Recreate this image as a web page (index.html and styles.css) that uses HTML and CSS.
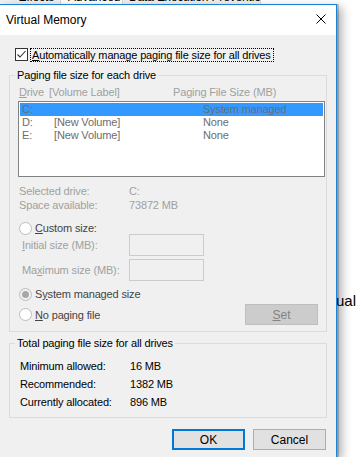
FILE: index.html
```html
<!DOCTYPE html>
<html lang="en">
<head>
    <meta charset="UTF-8">
    <meta name="viewport" content="width=device-width, initial-scale=1.0">
    <title>Virtual Memory</title>
    <link rel="stylesheet" href="styles.css">
</head>
<body>
    <div class="screen">
        <div class="behind-tabs">
            <div class="tab tab-first"><span>Effects</span></div>
            <div class="tab tab-active"><span>Advanced</span></div>
            <div class="tab tab-wide"><span>Data Execution Prevention</span></div>
        </div>
        <div class="behind-heading">ual memory</div>

        <div class="dialog">
            <div class="titlebar">
                <span class="title">Virtual Memory</span>
                <svg class="close" width="10" height="10" viewBox="0 0 10 10">
                    <path d="M0.5 0.5 L9.5 9.5 M9.5 0.5 L0.5 9.5" stroke="#000" stroke-width="1" fill="none"/>
                </svg>
            </div>

            <div class="body">
                <div class="auto-row">
                    <span class="checkbox">
                        <svg width="11" height="11" viewBox="0 0 11 11">
                            <path d="M1.5 5.5 L4 8 L9.5 2" stroke="#333" stroke-width="1.1" fill="none"/>
                        </svg>
                    </span>
                    <span class="focus-label"><u>A</u>utomatically manage paging file size for all drives</span>
                </div>

                <fieldset class="group group-drives">
                    <legend>Paging file size for each drive</legend>
                    <div class="cols">
                        <span class="col-drive"><u>D</u>rive</span>
                        <span class="col-label">[Volume Label]</span>
                        <span class="col-size">Paging File Size (MB)</span>
                    </div>
                    <div class="drive-list">
                        <div class="drive-row selected">
                            <span class="d-letter">C:</span>
                            <span class="d-label"></span>
                            <span class="d-size">System managed</span>
                        </div>
                        <div class="drive-row">
                            <span class="d-letter">D:</span>
                            <span class="d-label">[New Volume]</span>
                            <span class="d-size">None</span>
                        </div>
                        <div class="drive-row">
                            <span class="d-letter">E:</span>
                            <span class="d-label">[New Volume]</span>
                            <span class="d-size">None</span>
                        </div>
                    </div>

                    <div class="info">
                        <div class="info-row"><span class="info-key">Selected drive:</span><span>C:</span></div>
                        <div class="info-row"><span class="info-key">Space available:</span><span>73872 MB</span></div>
                    </div>

                    <div class="radio-row radio-custom">
                        <span class="radio"></span>
                        <span class="radio-text"><u>C</u>ustom size:</span>
                    </div>
                    <div class="size-row size-initial">
                        <span class="size-key"><u>I</u>nitial size (MB):</span>
                        <span class="size-input"></span>
                    </div>
                    <div class="size-row size-max">
                        <span class="size-key">Ma<u>x</u>imum size (MB):</span>
                        <span class="size-input"></span>
                    </div>
                    <div class="radio-row radio-system">
                        <span class="radio on"><span class="dot"></span></span>
                        <span class="radio-text">S<u>y</u>stem managed size</span>
                    </div>
                    <div class="radio-row radio-none">
                        <span class="radio"></span>
                        <span class="radio-text"><u>N</u>o paging file</span>
                        <span class="btn btn-set"><u>S</u>et</span>
                    </div>
                </fieldset>

                <fieldset class="group group-total">
                    <legend>Total paging file size for all drives</legend>
                    <div class="total-row"><span class="total-key">Minimum allowed:</span><span>16 MB</span></div>
                    <div class="total-row"><span class="total-key">Recommended:</span><span>1382 MB</span></div>
                    <div class="total-row"><span class="total-key">Currently allocated:</span><span>896 MB</span></div>
                </fieldset>

                <div class="actions">
                    <span class="btn btn-ok">OK</span>
                    <span class="btn btn-cancel">Cancel</span>
                </div>
            </div>
        </div>
    </div>
</body>
</html>
```

FILE: styles.css
```css
* {
    box-sizing: border-box;
}

body {
    margin: 0;
    background: #fff;
    font-family: "Segoe UI", "Liberation Sans", Arial, sans-serif;
    font-size: 11px;
    letter-spacing: -0.15px;
    color: #000;
}

u {
    text-decoration: underline;
    text-underline-offset: 1px;
}

.screen {
    position: relative;
    width: 358px;
    height: 457px;
    overflow: hidden;
    background: #fff;
}

/* window underneath */
.behind-tabs {
    display: flex;
    height: 4px;
    overflow: hidden;
    background: #fff;
}

.tab {
    display: flex;
    height: 4px;
    overflow: hidden;
    border-right: 1px solid #d9d9d9;
    font-size: 12px;
    line-height: 12px;
    white-space: nowrap;
}

.tab span {
    display: block;
    margin-top: -9px;
    padding: 0 6px;
}

.tab-first {
    width: 61px;
    justify-content: flex-end;
    background: #f0f0f0;
}

.tab-active {
    width: 62px;
    padding-left: 1px;
}

.tab-wide {
    width: 138px;
    background: #f0f0f0;
}

.behind-heading {
    position: absolute;
    left: 336px;
    top: 293px;
    font-size: 15px;
    line-height: 16px;
    letter-spacing: 0;
    white-space: nowrap;
    color: #000;
}

/* dialog */
.dialog {
    position: relative;
    z-index: 1;
    width: 337px;
    height: 453px;
    border-top: 1px solid #1883d7;
    border-right: 1px solid #1883d7;
    background: #f0f0f0;
    box-shadow: 2px 0 0 rgba(0, 0, 0, 0.2), 5px 3px 9px rgba(0, 0, 0, 0.3);
}

.titlebar {
    display: flex;
    align-items: center;
    justify-content: space-between;
    height: 30px;
    padding: 0 10px 0 6px;
    background: #fff;
}

.title {
    font-size: 12px;
    letter-spacing: 0;
    line-height: 28px;
    color: #000;
}

.close {
    display: block;
    margin-bottom: 2px;
}

.body {
    padding: 13px 9px 0 9px;
}

.auto-row {
    display: flex;
    align-items: flex-start;
    height: 14px;
    margin-left: 6px;
}

.checkbox {
    display: flex;
    align-items: center;
    justify-content: center;
    width: 13px;
    height: 13px;
    border: 1px solid #333;
    background: #fff;
}

.focus-label {
    margin-left: 2px;
    padding: 0 2px 0 1px;
    height: 14px;
    line-height: 12px;
    border: 1px dotted #000;
    white-space: nowrap;
}

/* group boxes */
.group {
    margin: 6px 0 0 0;
    padding: 0 1px 6px 8px;
    min-width: 0;
    border: 1px solid #dcdcdc;
}

.group legend {
    margin-left: -3px;
    padding: 0 2px;
    line-height: 14px;
    color: #000;
}

.cols {
    display: flex;
    height: 14px;
    margin-top: 3px;
    line-height: 14px;
    color: #a0a0a0;
}

.col-drive {
    width: 31px;
    padding-left: 1px;
}

.col-label {
    width: 124px;
}

.drive-list {
    height: 76px;
    margin-top: 2px;
    padding: 1px;
    border: 1px solid #828282;
    background: #fff;
}

.drive-row {
    display: flex;
    height: 13px;
    line-height: 13px;
    padding-left: 2px;
    color: #6d6d6d;
    white-space: nowrap;
}

.drive-row.selected {
    background: #3399ff;
}

.d-letter {
    width: 32px;
}

.d-label {
    width: 149px;
}

.info {
    margin-top: 7px;
}

.info-row,
.size-row,
.total-row {
    display: flex;
    align-items: center;
    white-space: nowrap;
}

.info-row {
    height: 14px;
    padding-left: 1px;
    color: #a0a0a0;
}

.info-key {
    width: 110px;
}

.radio-row {
    display: flex;
    align-items: center;
    height: 12px;
    padding-left: 1px;
    color: #444;
}

.radio-custom {
    margin-top: 10px;
}

.radio {
    display: flex;
    align-items: center;
    justify-content: center;
    width: 13px;
    height: 13px;
    border: 1px solid #bcbcbc;
    border-radius: 50%;
    background: #fff;
    flex-shrink: 0;
}

.radio.on {
    background: #f2f2f2;
}

.radio .dot {
    width: 7px;
    height: 7px;
    border-radius: 50%;
    background: #a8a8a8;
}

.radio-text {
    margin-left: 3px;
}

.size-row {
    height: 22px;
    padding-left: 4px;
    color: #a0a0a0;
}

.size-max {
    margin-top: 3px;
}

.size-key {
    width: 107px;
}

.size-input {
    width: 75px;
    height: 22px;
    border: 1px solid #cccccc;
    background: #f0f0f0;
}

.radio-system {
    margin-top: 7px;
}

.radio-none {
    height: 21px;
    margin-top: 4px;
    padding-right: 7px;
}

.btn {
    display: flex;
    align-items: center;
    justify-content: center;
    width: 73px;
    height: 21px;
    background: #e1e1e1;
    border: 1px solid #adadad;
    color: #000;
    font-size: 12px;
    letter-spacing: 0;
}

.btn-set {
    margin-left: auto;
    background: #cccccc;
    border-color: #bfbfbf;
    color: #838383;
}

.group-total {
    margin-top: 4px;
    padding-bottom: 6px;
}

.total-row {
    height: 18px;
    padding-left: 2px;
    color: #000;
}

.total-row:first-of-type {
    margin-top: 7px;
}

.total-key {
    width: 110px;
}

.actions {
    display: flex;
    justify-content: flex-end;
    gap: 8px;
    margin-top: 11px;
    padding-right: 1px;
}

.btn-ok {
    border: 2px solid #0078d7;
}
```
